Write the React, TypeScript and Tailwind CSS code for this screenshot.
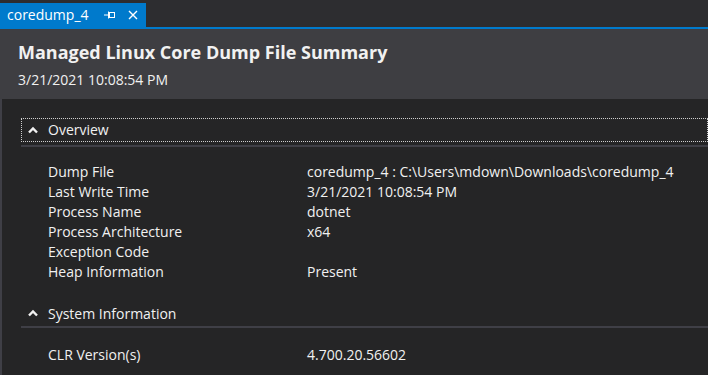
const rows = [
  { label: "Dump File", value: "coredump_4 : C:\\Users\\mdown\\Downloads\\coredump_4" },
  { label: "Last Write Time", value: "3/21/2021 10:08:54 PM" },
  { label: "Process Name", value: "dotnet" },
  { label: "Process Architecture", value: "x64" },
  { label: "Exception Code", value: "" },
  { label: "Heap Information", value: "Present" },
];

const Chevron = () => (
  <svg width="10" height="8" viewBox="0 0 10 8" className="shrink-0">
    <path d="M1 6.5 L5 2.5 L9 6.5" fill="none" stroke="#f1f1f1" strokeWidth="2.4" />
  </svg>
);

export default function App() {
  return (
    <div
      className="w-[708px] h-[375px] overflow-hidden bg-[#252526] text-[#f1f1f1] text-[14px]"
      style={{ fontFamily: '"Open Sans", "Noto Sans", sans-serif' }}
    >
      {/* Tab well */}
      <div className="h-[27px] bg-[#2d2d30] flex items-end">
        <div className="h-[24px] w-[146px] bg-[#007acc] flex items-center pl-[7px] text-white">
          <span className="text-[14px] leading-none">coredump_4</span>
          {/* pin */}
          <svg width="11" height="8" viewBox="0 0 11 8" className="ml-[15px]">
            <path d="M0 4 H4 M4.5 0.5 V7.5" stroke="#fff" strokeWidth="1" fill="none" />
            <rect x="5.5" y="1.5" width="5" height="5" stroke="#fff" strokeWidth="1" fill="none" />
          </svg>
          <svg width="10" height="10" viewBox="0 0 10 10" className="ml-[13px]">
            <path d="M1 1 L9 9 M9 1 L1 9" stroke="#fff" strokeWidth="1.4" />
          </svg>
        </div>
      </div>
      <div className="h-[2px] bg-[#007acc]" />

      {/* Header */}
      <div className="h-[70px] bg-[#3e3e42] pl-[18px] pt-[11px]">
        <div className="text-[18px] font-bold leading-[24px]">Managed Linux Core Dump File Summary</div>
        <div className="text-[14px] leading-[20px] mt-[6px]">3/21/2021 10:08:54 PM</div>
      </div>

      {/* Body */}
      <div className="border-l-2 border-[#3f3f46] h-full pl-[19px] pt-[19px]">
        <div className="h-[24px] border border-dotted border-[#d0d0d0] flex items-center pl-[6px] gap-[10px]">
          <Chevron />
          <span className="leading-none">Overview</span>
        </div>
        <div className="h-[2px] mt-[3px] bg-[#3f3f46]" />
        <div className="pt-[14px] pl-[27px]">
          {rows.map((r) => (
            <div key={r.label} className="flex h-[20px] items-center">
              <span className="w-[259px]">{r.label}</span>
              <span>{r.value}</span>
            </div>
          ))}
        </div>

        <div className="h-[26px] mt-[19px] flex items-center pl-[7px] gap-[10px]">
          <Chevron />
          <span>System Information</span>
        </div>
        <div className="h-[2px] bg-[#3f3f46]" />
        <div className="pt-[16px] pl-[27px]">
          <div className="flex h-[20px] items-center">
            <span className="w-[259px]">CLR Version(s)</span>
            <span>4.700.20.56602</span>
          </div>
        </div>
      </div>
    </div>
  );
}
